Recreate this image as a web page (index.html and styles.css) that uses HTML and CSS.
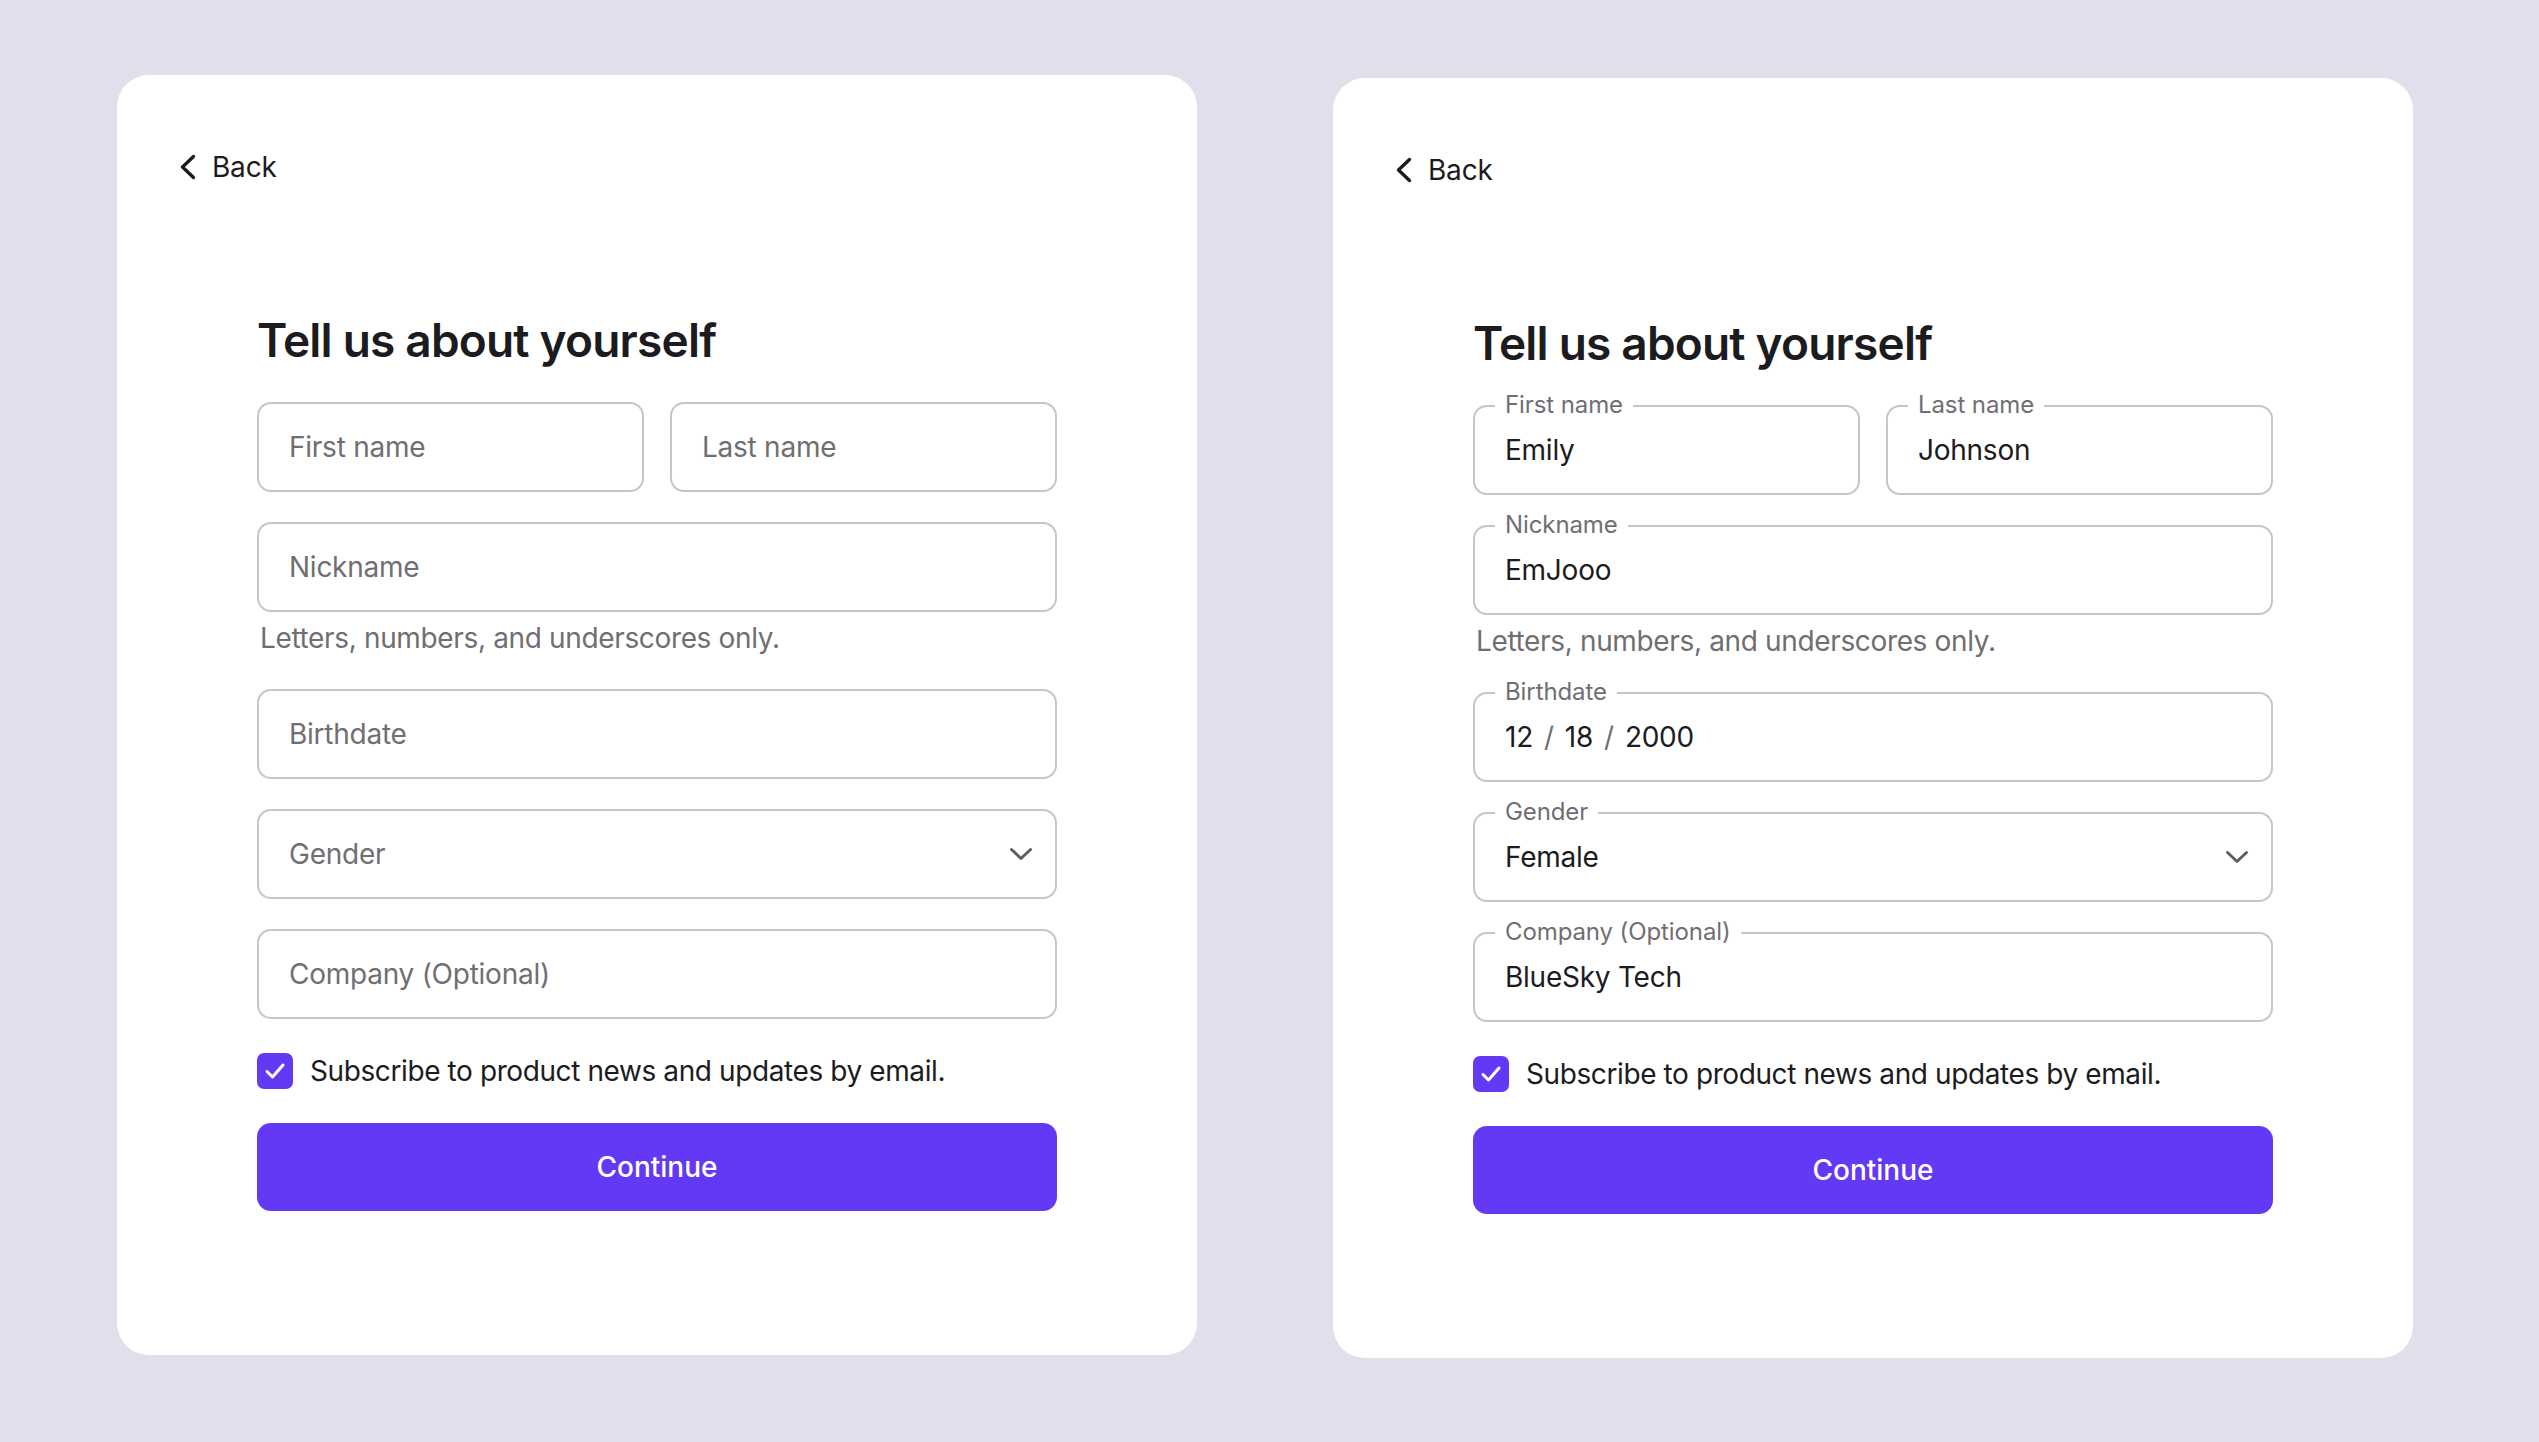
FILE: index.html
```html
<!DOCTYPE html>
<html lang="en">
<head>
<meta charset="utf-8">
<title>Tell us about yourself</title>
<link rel="stylesheet" href="styles.css">
</head>
<body>
<main class="page">
  <section class="card">
    <a class="back" href="#">
      <svg class="back-icon" width="18" height="26" viewBox="0 0 18 26"><polyline points="14.5,2.5 3.5,13 14.5,23.5" fill="none" stroke="#1c1c1e" stroke-width="3.4" stroke-linecap="round" stroke-linejoin="round"/></svg>
      <span>Back</span>
    </a>
    <form class="form">
      <h1 class="title">Tell us about yourself</h1>
      <div class="row">
        <div class="field"><span class="placeholder">First name</span></div>
        <div class="field"><span class="placeholder">Last name</span></div>
      </div>
      <div class="group">
        <div class="field"><span class="placeholder">Nickname</span></div>
        <p class="hint">Letters, numbers, and underscores only.</p>
      </div>
      <div class="field"><span class="placeholder">Birthdate</span></div>
      <div class="field field--select">
        <span class="placeholder">Gender</span>
        <svg class="chev" width="24" height="14" viewBox="0 0 24 14"><polyline points="2.5,2.5 12,11.5 21.5,2.5" fill="none" stroke="#5f5f63" stroke-width="3" stroke-linecap="round" stroke-linejoin="round"/></svg>
      </div>
      <div class="field"><span class="placeholder">Company (Optional)</span></div>
      <label class="check">
        <span class="box"><svg width="22" height="18" viewBox="0 0 22 18"><polyline points="3,9.5 8.5,15 19,3" fill="none" stroke="#fff" stroke-width="3" stroke-linecap="round" stroke-linejoin="round"/></svg></span>
        <span>Subscribe to product news and updates by email.</span>
      </label>
      <button class="btn" type="button">Continue</button>
    </form>
  </section>

  <section class="card card--filled">
    <a class="back" href="#">
      <svg class="back-icon" width="18" height="26" viewBox="0 0 18 26"><polyline points="14.5,2.5 3.5,13 14.5,23.5" fill="none" stroke="#1c1c1e" stroke-width="3.4" stroke-linecap="round" stroke-linejoin="round"/></svg>
      <span>Back</span>
    </a>
    <form class="form">
      <h1 class="title">Tell us about yourself</h1>
      <div class="row">
        <div class="field"><span class="label">First name</span><span class="value">Emily</span></div>
        <div class="field"><span class="label">Last name</span><span class="value">Johnson</span></div>
      </div>
      <div class="group">
        <div class="field"><span class="label">Nickname</span><span class="value">EmJooo</span></div>
        <p class="hint">Letters, numbers, and underscores only.</p>
      </div>
      <div class="field"><span class="label">Birthdate</span><span class="value">12<span class="sep">/</span>18<span class="sep">/</span>2000</span></div>
      <div class="field field--select">
        <span class="label">Gender</span><span class="value">Female</span>
        <svg class="chev" width="24" height="14" viewBox="0 0 24 14"><polyline points="2.5,2.5 12,11.5 21.5,2.5" fill="none" stroke="#5f5f63" stroke-width="3" stroke-linecap="round" stroke-linejoin="round"/></svg>
      </div>
      <div class="field"><span class="label">Company (Optional)</span><span class="value">BlueSky Tech</span></div>
      <label class="check">
        <span class="box"><svg width="22" height="18" viewBox="0 0 22 18"><polyline points="3,9.5 8.5,15 19,3" fill="none" stroke="#fff" stroke-width="3" stroke-linecap="round" stroke-linejoin="round"/></svg></span>
        <span>Subscribe to product news and updates by email.</span>
      </label>
      <button class="btn" type="button">Continue</button>
    </form>
  </section>
</main>
</body>
</html>
```

FILE: styles.css
```css
* { box-sizing: border-box; }

html, body {
  margin: 0;
  padding: 0;
}

body {
  width: 2539px;
  height: 1442px;
  background: #e2dfec;
  font-family: Inter, "Noto Sans", "Liberation Sans", sans-serif;
  color: #1c1c1e;
  overflow: hidden;
}

.page {
  display: flex;
  align-items: flex-start;
  gap: 136px;
  padding: 75px 0 0 117px;
}

.card {
  width: 1080px;
  height: 1280px;
  background: #ffffff;
  border-radius: 32px;
  padding-top: 75px;
  display: flex;
  flex-direction: column;
}

.card--filled {
  margin-top: 3px;
}

.back {
  display: flex;
  align-items: center;
  gap: 15px;
  margin-left: 62px;
  height: 34px;
  font-size: 28px;
  line-height: 34px;
  letter-spacing: -0.2px;
  color: #1c1c1e;
  text-decoration: none;
  align-self: flex-start;
}

.back-icon {
  display: block;
}

.form {
  width: 800px;
  margin: 128px auto 0;
  display: flex;
  flex-direction: column;
  gap: 30px;
}

.title {
  margin: 0 0 4px;
  font-size: 46px;
  line-height: 56px;
  font-weight: 600;
  letter-spacing: -0.8px;
  color: #1c1c1e;
}

.row {
  display: grid;
  grid-template-columns: 1fr 1fr;
  gap: 26px;
}

.group {
  display: flex;
  flex-direction: column;
  gap: 9px;
  margin-bottom: 4px;
}

.field {
  position: relative;
  height: 90px;
  border: 2px solid #c6c6ca;
  border-radius: 14px;
  display: flex;
  align-items: center;
  padding: 0 30px;
  font-size: 28px;
  line-height: 34px;
  letter-spacing: -0.25px;
}

.field--select {
  justify-content: space-between;
  padding-right: 22px;
}

.placeholder {
  color: #6f6f73;
}

.value {
  color: #1c1c1e;
}

.sep {
  color: #6f6f73;
  margin: 0 11px;
}

.label {
  position: absolute;
  top: -16px;
  left: 20px;
  padding: 0 10px;
  background: #ffffff;
  font-size: 24px;
  line-height: 28px;
  letter-spacing: -0.1px;
  color: #6f6f73;
}

.chev {
  display: block;
}

.hint {
  margin: 0;
  padding-left: 3px;
  font-size: 28px;
  line-height: 34px;
  letter-spacing: -0.35px;
  color: #6f6f73;
}

.check {
  display: flex;
  align-items: center;
  gap: 17px;
  margin-top: 4px;
  font-size: 28px;
  line-height: 36px;
  letter-spacing: -0.4px;
  color: #1c1c1e;
}

.box {
  width: 36px;
  height: 36px;
  border-radius: 7px;
  background: #6439f5;
  display: flex;
  align-items: center;
  justify-content: center;
  flex: none;
}

.box svg {
  display: block;
}

.btn {
  margin-top: 4px;
  height: 88px;
  border: none;
  border-radius: 14px;
  background: #6439f5;
  color: #ffffff;
  font-family: inherit;
  font-size: 28px;
  font-weight: 500;
  cursor: pointer;
}
```
